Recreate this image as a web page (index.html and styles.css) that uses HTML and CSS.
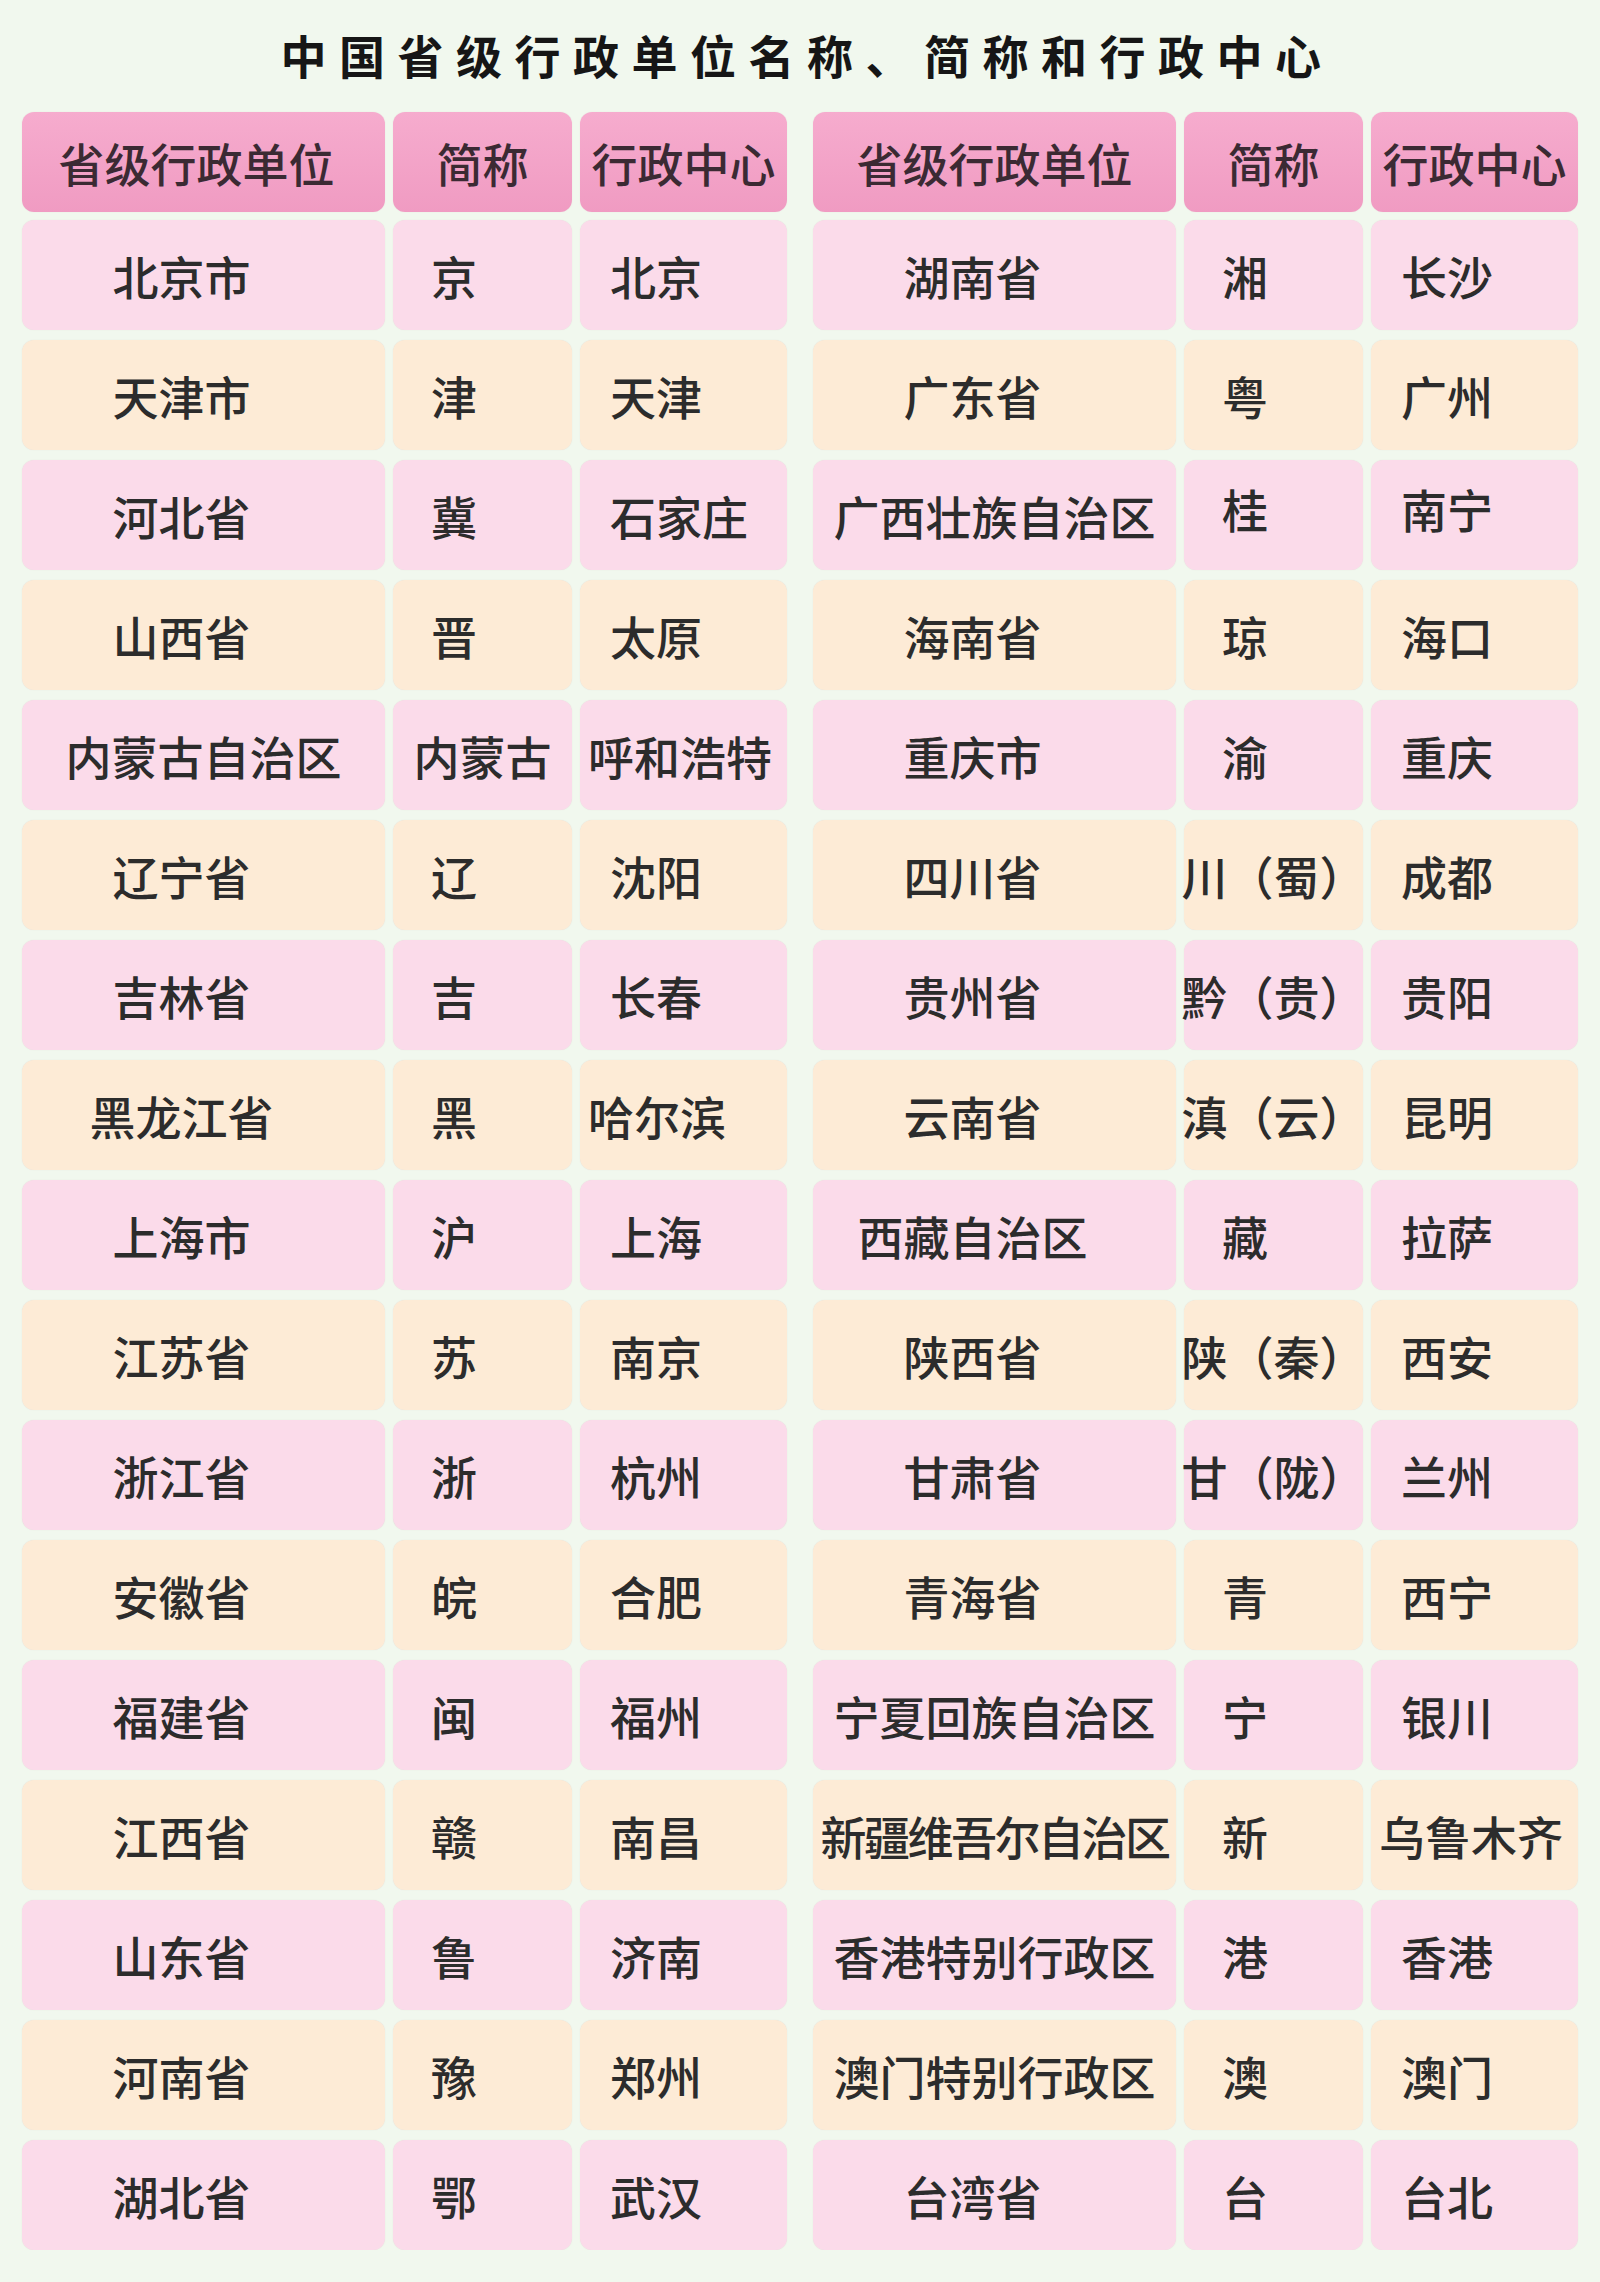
FILE: index.html
```html
<!DOCTYPE html>
<html lang="zh-CN">
<head>
<meta charset="utf-8">
<title>中国省级行政单位名称、简称和行政中心</title>
<link rel="stylesheet" href="styles.css">
</head>
<body>
<h1 class="title">中国省级行政单位名称、简称和行政中心</h1>
<div class="sheet">
  <div class="half">
    <div class="cell hd first">省级行政单位</div><div class="cell hd">简称</div><div class="cell hd">行政中心</div>
    <div class="row pink"><div class="cell name">北京市</div><div class="cell abbr">京</div><div class="cell cap">北京</div></div>
    <div class="row peach"><div class="cell name">天津市</div><div class="cell abbr">津</div><div class="cell cap">天津</div></div>
    <div class="row pink"><div class="cell name">河北省</div><div class="cell abbr">冀</div><div class="cell cap">石家庄</div></div>
    <div class="row peach"><div class="cell name">山西省</div><div class="cell abbr">晋</div><div class="cell cap">太原</div></div>
    <div class="row pink"><div class="cell name wide">内蒙古自治区</div><div class="cell abbr wide">内蒙古</div><div class="cell cap long">呼和浩特</div></div>
    <div class="row peach"><div class="cell name">辽宁省</div><div class="cell abbr">辽</div><div class="cell cap">沈阳</div></div>
    <div class="row pink"><div class="cell name">吉林省</div><div class="cell abbr">吉</div><div class="cell cap">长春</div></div>
    <div class="row peach"><div class="cell name">黑龙江省</div><div class="cell abbr">黑</div><div class="cell cap long">哈尔滨</div></div>
    <div class="row pink"><div class="cell name">上海市</div><div class="cell abbr">沪</div><div class="cell cap">上海</div></div>
    <div class="row peach"><div class="cell name">江苏省</div><div class="cell abbr">苏</div><div class="cell cap">南京</div></div>
    <div class="row pink"><div class="cell name">浙江省</div><div class="cell abbr">浙</div><div class="cell cap">杭州</div></div>
    <div class="row peach"><div class="cell name">安徽省</div><div class="cell abbr">皖</div><div class="cell cap">合肥</div></div>
    <div class="row pink"><div class="cell name">福建省</div><div class="cell abbr">闽</div><div class="cell cap">福州</div></div>
    <div class="row peach"><div class="cell name">江西省</div><div class="cell abbr">赣</div><div class="cell cap">南昌</div></div>
    <div class="row pink"><div class="cell name">山东省</div><div class="cell abbr">鲁</div><div class="cell cap">济南</div></div>
    <div class="row peach"><div class="cell name">河南省</div><div class="cell abbr">豫</div><div class="cell cap">郑州</div></div>
    <div class="row pink"><div class="cell name">湖北省</div><div class="cell abbr">鄂</div><div class="cell cap">武汉</div></div>
  </div>
  <div class="half">
    <div class="cell hd">省级行政单位</div><div class="cell hd">简称</div><div class="cell hd">行政中心</div>
    <div class="row pink"><div class="cell name">湖南省</div><div class="cell abbr">湘</div><div class="cell cap">长沙</div></div>
    <div class="row peach"><div class="cell name">广东省</div><div class="cell abbr">粤</div><div class="cell cap">广州</div></div>
    <div class="row pink"><div class="cell name wide up">广西壮族自治区</div><div class="cell abbr up">桂</div><div class="cell cap up">南宁</div></div>
    <div class="row peach"><div class="cell name">海南省</div><div class="cell abbr">琼</div><div class="cell cap">海口</div></div>
    <div class="row pink"><div class="cell name">重庆市</div><div class="cell abbr">渝</div><div class="cell cap">重庆</div></div>
    <div class="row peach"><div class="cell name">四川省</div><div class="cell abbr wide">川（蜀）</div><div class="cell cap">成都</div></div>
    <div class="row pink"><div class="cell name">贵州省</div><div class="cell abbr wide">黔（贵）</div><div class="cell cap">贵阳</div></div>
    <div class="row peach"><div class="cell name">云南省</div><div class="cell abbr wide">滇（云）</div><div class="cell cap">昆明</div></div>
    <div class="row pink"><div class="cell name">西藏自治区</div><div class="cell abbr">藏</div><div class="cell cap">拉萨</div></div>
    <div class="row peach"><div class="cell name">陕西省</div><div class="cell abbr wide">陕（秦）</div><div class="cell cap">西安</div></div>
    <div class="row pink"><div class="cell name">甘肃省</div><div class="cell abbr wide">甘（陇）</div><div class="cell cap">兰州</div></div>
    <div class="row peach"><div class="cell name">青海省</div><div class="cell abbr">青</div><div class="cell cap">西宁</div></div>
    <div class="row pink"><div class="cell name wide">宁夏回族自治区</div><div class="cell abbr">宁</div><div class="cell cap">银川</div></div>
    <div class="row peach"><div class="cell name wide squeeze">新疆维吾尔自治区</div><div class="cell abbr">新</div><div class="cell cap long">乌鲁木齐</div></div>
    <div class="row pink"><div class="cell name wide">香港特别行政区</div><div class="cell abbr">港</div><div class="cell cap">香港</div></div>
    <div class="row peach"><div class="cell name wide">澳门特别行政区</div><div class="cell abbr">澳</div><div class="cell cap">澳门</div></div>
    <div class="row pink"><div class="cell name">台湾省</div><div class="cell abbr">台</div><div class="cell cap">台北</div></div>
  </div>
</div>
</body>
</html>
```
FILE: styles.css
```css
html, body {
  margin: 0;
  padding: 0;
}

body {
  background: #f1f8ee;
  font-family: "Noto Sans CJK SC", "Noto Sans", sans-serif;
  color: #2c2c2c;
}

.title {
  margin: 0;
  box-sizing: border-box;
  height: 112px;
  padding: 31px 0 0 14px;
  font-family: "Noto Sans CJK SC", sans-serif;
  font-weight: 700;
  font-size: 46px;
  line-height: 46px;
  letter-spacing: 12.5px;
  text-align: center;
  color: #161616;
}

.sheet {
  display: flex;
  gap: 26px;
  padding-left: 22px;
}

.half {
  display: grid;
  grid-template-columns: 363px 179px 207px;
  grid-template-rows: 98px;
  grid-auto-rows: 110px;
  column-gap: 8px;
  row-gap: 10px;
}

.row {
  display: contents;
}

.cell {
  box-sizing: border-box;
  display: flex;
  align-items: center;
  justify-content: center;
  border-radius: 12px;
  font-size: 46px;
  font-weight: 500;
  line-height: 1;
  white-space: nowrap;
  box-shadow: 0 0 1px rgba(180, 140, 150, 0.25);
}

.hd {
  margin-bottom: -2px;
  background: linear-gradient(#f6acce, #f09bc2);
  color: #3b2a33;
}

.hd.first {
  padding-right: 14px;
}

.pink > .cell {
  background: #fbdbea;
}

.peach > .cell {
  background: #fdebd6;
}

.name {
  padding-right: 44px;
}

.abbr {
  padding-right: 57px;
}

.cap {
  justify-content: flex-start;
  padding-left: 30px;
}

.cell.wide {
  padding-left: 0;
  padding-right: 0;
}

.cap.long {
  padding-left: 8px;
}

.squeeze {
  letter-spacing: -2.5px;
}

.up {
  padding-bottom: 14px;
}

.name.up {
  padding-bottom: 0;
}
```
